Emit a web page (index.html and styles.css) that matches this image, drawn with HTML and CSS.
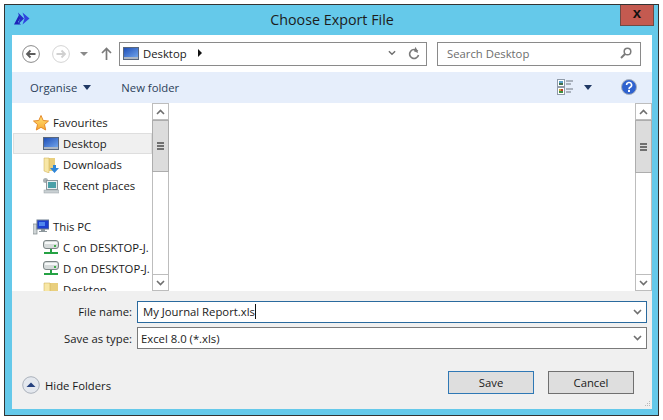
FILE: index.html
```html
<!DOCTYPE html>
<html lang="en">
<head>
<meta charset="utf-8">
<title>Choose Export File</title>
<link rel="stylesheet" href="styles.css">
</head>
<body>
<svg width="0" height="0" class="defs">
  <defs>
    <linearGradient id="sky" x1="0" y1="0" x2="1" y2="1">
      <stop offset="0" stop-color="#1f4fb8"/>
      <stop offset="1" stop-color="#6fa3ea"/>
    </linearGradient>
    <linearGradient id="gold" x1="0" y1="0" x2="0" y2="1">
      <stop offset="0" stop-color="#ffe27a"/>
      <stop offset="1" stop-color="#f9a92f"/>
    </linearGradient>
    <symbol id="screen" viewBox="0 0 16 13">
      <rect x="0" y="0" width="16" height="13" fill="#59677c"/>
      <rect x="1" y="1" width="14" height="9" fill="url(#sky)"/>
      <rect x="1" y="10" width="14" height="2" fill="#aeb8c4"/>
    </symbol>
    <symbol id="drive" viewBox="0 0 16 16">
      <rect x="0.500" y="0.500" width="15" height="8" rx="2.500" fill="#d5dada" stroke="#7d8686"/>
      <rect x="2" y="2" width="12" height="2" fill="#f6f8f8"/>
      <rect x="11" y="5" width="2" height="2" fill="#3fae49"/>
      <path d="M7 9h2v3h6v2H1v-2h6z" fill="#25a244"/>
    </symbol>
    <symbol id="chev" viewBox="0 0 9 6">
      <path d="M1 1l3.500 3.500L8 1" fill="none" stroke="#6f6f6f" stroke-width="1.600"/>
    </symbol>
  </defs>
</svg>
<div class="window">
  <header class="titlebar">
    <svg class="app-icon" viewBox="0 0 16 13" width="16" height="13">
      <path d="M0 12.500L5 3l1.500 3L4 10l3 2.500z" fill="#1e22b8"/>
      <path d="M4 .5l6 6-6 6 1.800-6z" fill="#2430c8"/>
      <path d="M8.500 .5l7 6-7 6 2-6z" fill="#2f45e0"/>
    </svg>
    <h1 class="title">Choose Export File</h1>
    <button class="close" type="button">x</button>
  </header>
  <div class="client">
    <div class="navrow">
      <span class="round"><svg viewBox="0 0 18 18" width="18" height="18"><circle cx="9" cy="9" r="8.400" fill="#fff" stroke="#8a8a8a"/><path d="M13.500 9H5M8.500 5.500L5 9l3.500 3.500" fill="none" stroke="#5c5c5c" stroke-width="1.800"/></svg></span>
      <span class="round second"><svg viewBox="0 0 18 18" width="18" height="18"><circle cx="9" cy="9" r="8.400" fill="#fff" stroke="#d4d4d4"/><path d="M4.500 9H13M9.500 5.500L13 9l-3.500 3.500" fill="none" stroke="#d0d0d0" stroke-width="1.800"/></svg></span>
      <span class="tri-grey"></span>
      <svg class="up" viewBox="0 0 11 13" width="11" height="13"><path d="M5.500 13V2M1 6l4.500-4.500L10 6" fill="none" stroke="#7a7a7a" stroke-width="1.700"/></svg>
      <div class="address">
        <svg class="addr-icon"><use href="#screen"/></svg>
        <span class="addr-text">Desktop</span>
        <span class="tri-right"></span>
        <svg class="addr-chev"><use href="#chev"/></svg>
        <svg class="refresh" viewBox="0 0 12 13" width="12" height="13"><path d="M9.700 4.300A4.500 4.500 0 1 0 10.500 8" fill="none" stroke="#7a7a7a" stroke-width="1.600"/><path d="M6.500 0v5h4.500z" fill="#7a7a7a" transform="rotate(20 8 3)"/></svg>
      </div>
      <div class="search">
        <span>Search Desktop</span>
        <svg viewBox="0 0 12 12" width="12" height="12"><circle cx="7.500" cy="4.500" r="3.300" fill="none" stroke="#7b7b7b" stroke-width="1.500"/><path d="M5 7L1 11" stroke="#7b7b7b" stroke-width="2"/></svg>
      </div>
    </div>
    <div class="cmdbar">
      <span class="cmd">Organise</span>
      <span class="tri-navy"></span>
      <span class="cmd newfolder">New folder</span>
      <svg class="views" viewBox="0 0 17 16" width="17" height="16">
        <rect x=".5" y=".5" width="7" height="7" fill="#fff" stroke="#8f9aa8"/>
        <rect x="2" y="2" width="4" height="2" fill="#5aa0c8"/><rect x="2" y="4" width="4" height="2" fill="#3f6f4a"/>
        <rect x=".5" y="8.500" width="7" height="7" fill="#fff" stroke="#8f9aa8"/>
        <rect x="2" y="10" width="2" height="2" fill="#c9a83a"/><rect x="4" y="10" width="2" height="2" fill="#c0392b"/><rect x="2" y="12" width="4" height="2" fill="#3e8e41"/>
        <path d="M9 2h7M9 5h5M9 10h7M9 13h5" stroke="#6f7780" stroke-width="1"/>
      </svg>
      <span class="tri-navy views-tri"></span>
      <svg class="help" viewBox="0 0 16 16" width="16" height="16"><circle cx="8" cy="8" r="7.500" fill="#2f62cf" stroke="#a8b0bc"/><path d="M5.600 6a2.500 2.500 0 1 1 3.600 2.200C8.300 8.700 8 9.200 8 10.200" fill="none" stroke="#fff" stroke-width="1.600"/><rect x="7" y="11" width="2" height="2" fill="#fff"/></svg>
    </div>
    <div class="main">
      <nav class="tree">
        <div class="group first">
          <svg class="gicon" viewBox="0 0 16 16" width="16" height="16"><path d="M8 .5l2.200 5 5.300.5-4 3.500 1.200 5.500L8 12.300 3.300 15l1.200-5.500-4-3.500 5.300-.5z" fill="url(#gold)" stroke="#e58a2b"/></svg>
          <span class="label">Favourites</span>
        </div>
        <div class="item selected"><svg class="iicon tv"><use href="#screen"/></svg><span class="label">Desktop</span></div>
        <div class="item">
          <svg class="iicon" viewBox="0 0 16 16" width="16" height="16"><path d="M1 1h11v13H1z" fill="#e9cf7e"/><path d="M1 1h5v15l-5-2z" fill="#f8e7a6" stroke="#c9a94f" stroke-width=".5"/><path d="M10 8h3v3h3l-4.500 5L7 11h3z" fill="#2f86d8"/></svg>
          <span class="label">Downloads</span>
        </div>
        <div class="item">
          <svg class="iicon" viewBox="0 0 16 16" width="16" height="16"><rect x="0" y="0" width="5" height="5" rx="2.500" fill="#a9b1b5"/><rect x="3.500" y="2.500" width="11" height="9" fill="#e9eef0" stroke="#8d979c"/><rect x="5" y="4" width="8" height="6" fill="#4aa0a8"/><rect x="1" y="12" width="15" height="3" fill="#c9d0d3" stroke="#98a1a5" stroke-width=".5"/></svg>
          <span class="label">Recent places</span>
        </div>
        <div class="group second">
          <svg class="gicon" viewBox="0 0 16 16" width="16" height="16"><rect x="0" y="5" width="4" height="10" fill="#cfd5d6" stroke="#7f8a8c" stroke-width=".7"/><rect x="4" y="1" width="12" height="9" fill="#1c3fd0" stroke="#6c7c8e"/><rect x="6" y="3" width="6" height="4" fill="#4f87ee"/><rect x="8" y="10" width="4" height="2" fill="#8d979c"/><rect x="6" y="12" width="8" height="1" fill="#8d979c"/></svg>
          <span class="label">This PC</span>
        </div>
        <div class="item"><svg class="iicon"><use href="#drive"/></svg><span class="label">C on DESKTOP-J.</span></div>
        <div class="item"><svg class="iicon"><use href="#drive"/></svg><span class="label">D on DESKTOP-J.</span></div>
        <div class="item"><svg class="iicon" viewBox="0 0 16 16" width="16" height="16"><path d="M1 1h14v14H1z" fill="#e9cf7e"/><path d="M1 1h6v15l-6-1z" fill="#f8e7a6" stroke="#c9a94f" stroke-width=".5"/></svg><span class="label">Desktop</span></div>
      </nav>
      <div class="scrollbar">
        <span class="sb-btn"><svg class="sb-chev up-chev"><use href="#chev"/></svg></span>
        <span class="sb-thumb tree-thumb"><i></i></span>
        <span class="sb-track"></span>
        <span class="sb-btn"><svg class="sb-chev"><use href="#chev"/></svg></span>
      </div>
      <div class="files"></div>
      <div class="scrollbar">
        <span class="sb-btn"><svg class="sb-chev up-chev"><use href="#chev"/></svg></span>
        <span class="sb-thumb file-thumb"><i></i></span>
        <span class="sb-track"></span>
        <span class="sb-btn"><svg class="sb-chev"><use href="#chev"/></svg></span>
      </div>
    </div>
    <div class="footer">
      <div class="field name">
        <label>File name:</label>
        <div class="combo focus"><span class="name-text">My Journal Report.xls</span><span class="caret"></span><svg class="combo-chev"><use href="#chev"/></svg></div>
      </div>
      <div class="field type">
        <label>Save as type:</label>
        <div class="combo"><span>Excel 8.0 (*.xls)</span><svg class="combo-chev"><use href="#chev"/></svg></div>
      </div>
      <div class="actions">
        <svg class="hide-icon" viewBox="0 0 18 18" width="18" height="18"><circle cx="9" cy="9" r="8.300" fill="#e4e8ee" stroke="#aab1bb"/><path d="M4.500 11L9 6.500l4.500 4.500z" fill="#25417f"/></svg>
        <span class="hide-label">Hide Folders</span>
        <button class="btn default" type="button">Save</button>
        <button class="btn" type="button">Cancel</button>
      </div>
      <svg class="grip" viewBox="0 0 7 7" width="7" height="7"><path d="M5 0h1v1H5zM3 2h1v1H3zM5 2h1v1H5zM1 4h1v1H1zM3 4h1v1H3zM5 4h1v1H5z" fill="#b9b9b9"/></svg>
    </div>
  </div>
</div>
</body>
</html>
```
FILE: styles.css
```css
* { box-sizing: border-box; }
html, body { margin: 0; padding: 0; background: #fff; }
body {
  width: 663px;
  height: 420px;
  padding: 4px 0 0 4px;
  font-family: "Open Sans", "Noto Sans", sans-serif;
  font-size: 11.300px;
  color: #1a1a1a;
  overflow: hidden;
}
.defs { position: absolute; }

.window {
  position: relative;
  width: 655px;
  height: 412px;
  border: 1px solid #333;
  background: #65c9ea;
  padding: 0 6px 6px 7px;
  display: flex;
  flex-direction: column;
}
.titlebar {
  height: 30px;
  flex: none;
  display: flex;
  align-items: center;
  justify-content: center;
}
.app-icon { position: absolute; left: 9px; top: 7px; }
.title { margin: 0; font-size: 14.300px; font-weight: 400; color: #1c1c1c; padding-bottom: 1px; }
.close {
  position: absolute;
  right: 4px;
  top: 0;
  width: 34px;
  height: 21px;
  background: #c45a50;
  border: 1px solid #6f4a45;
  border-top: 0;
  padding: 0 0 6px;
  font: 700 15px/15px "Liberation Sans", sans-serif;
  color: #111;
}
.client { flex: 1; display: flex; flex-direction: column; background: #fff; min-height: 0; }

.navrow { height: 37px; flex: none; display: flex; align-items: center; padding: 0 11px 0 10px; }
.round { display: flex; }
.round.second { margin-left: 12px; }
.tri-grey { margin-left: 10px; border: 4px solid transparent; border-top: 4px solid #8a8a8a; border-bottom: 0; }
.up { margin-left: 13px; }
.address {
  margin-left: 7px;
  width: 308px;
  height: 24px;
  border: 1px solid #8a8a8a;
  display: flex;
  align-items: center;
  padding: 0 6px 1px 3px;
}
.addr-icon { width: 16px; height: 13px; }
.addr-text { margin-left: 4px; }
.tri-right { margin-left: 11px; border: 4px solid transparent; border-left: 4px solid #111; border-right: 0; }
.addr-chev { width: 8px; height: 6px; margin-left: auto; }
.refresh { margin-left: 12px; }
.search {
  margin-left: 10px;
  width: 204px;
  height: 24px;
  border: 1px solid #8a8a8a;
  display: flex;
  align-items: center;
  justify-content: space-between;
  padding: 0 8px 1px 9px;
  color: #6d6d6d;
}

.cmdbar {
  height: 31px;
  flex: none;
  background: #e6eefb;
  display: flex;
  align-items: center;
  padding: 0 15px 1px 18px;
  color: #2c3f5a;
}
.tri-navy { border: 4px solid transparent; border-top: 5px solid #1f3864; border-bottom: 0; margin-left: 6px; }
.newfolder { margin-left: 30px; }
.views { margin-left: auto; }
.views-tri { margin-left: 10px; }
.help { margin-left: 29px; }

.main { height: 188px; flex: none; display: flex; overflow: hidden; }
.tree { width: 140px; flex: none; overflow: hidden; padding: 9px 0 0 1px; }
.group { height: 21px; display: flex; align-items: center; padding-left: 20px; gap: 4px; }
.group.second { margin-top: 20px; }
.item { height: 21px; display: flex; align-items: center; padding-left: 30px; gap: 4px; white-space: nowrap; overflow: hidden; }
.item.selected { background: #f0f0f0; border: 1px solid #dedede; padding-left: 29px; }
.iicon { width: 16px; height: 16px; flex: none; }
.iicon.tv { height: 13px; }
.gicon { flex: none; }

.scrollbar { width: 17px; flex: none; display: flex; flex-direction: column; border: 1px solid #bdbdbd; border-width: 0 1px; background: #fff; }
.sb-btn { height: 17px; flex: none; display: flex; align-items: center; justify-content: center; border-top: 1px solid #bdbdbd; border-bottom: 1px solid #bdbdbd; }
.sb-chev { width: 9px; height: 6px; }
.up-chev { transform: rotate(180deg); }
.sb-thumb { flex: none; background: #dcdcdc; border: 1px solid #adadad; margin: 0 -1px; display: flex; align-items: center; justify-content: center; }
.tree-thumb { height: 52px; }
.file-thumb { height: 53px; }
.sb-thumb i { width: 7px; height: 8px; background: repeating-linear-gradient(#707070 0 2px, transparent 2px 3px); }
.sb-track { flex: 1; }
.files { flex: 1; background: #fff; }

.footer { position: relative; flex: 1; background: #f0f0f0; padding: 10px 5px 0 0; }
.field { display: flex; align-items: center; height: 22px; }
.field.type { margin-top: 4px; }
.field label { width: 120px; text-align: right; margin-right: 5px; }
.field.name label { padding-bottom: 2px; }
.combo {
  flex: 1;
  height: 22px;
  background: #fff;
  border: 1px solid #7a7a7a;
  display: flex;
  align-items: center;
  padding: 0 4px 0 3px;
}
.combo.focus { border-color: #2a6a9e; padding-bottom: 1px; }
.name-text { margin-left: 2px; }
.caret { width: 1px; height: 15px; background: #111; }
.combo-chev { width: 9px; height: 6px; margin-left: auto; }
.actions { display: flex; align-items: center; margin-top: 22px; padding-left: 10px; height: 23px; padding-right: 13px; }
.hide-icon { flex: none; margin-top: 5px; }
.hide-label { margin-left: 5px; margin-right: auto; margin-top: 5px; }
.btn {
  width: 86px;
  height: 23px;
  background: #dedede;
  border: 1px solid #707070;
  font: inherit;
  color: #1a1a1a;
  padding: 0;
}
.btn.default { border-color: #2f78b5; margin-right: 14px; }
.grip { position: absolute; right: 1px; bottom: 1px; }
```
